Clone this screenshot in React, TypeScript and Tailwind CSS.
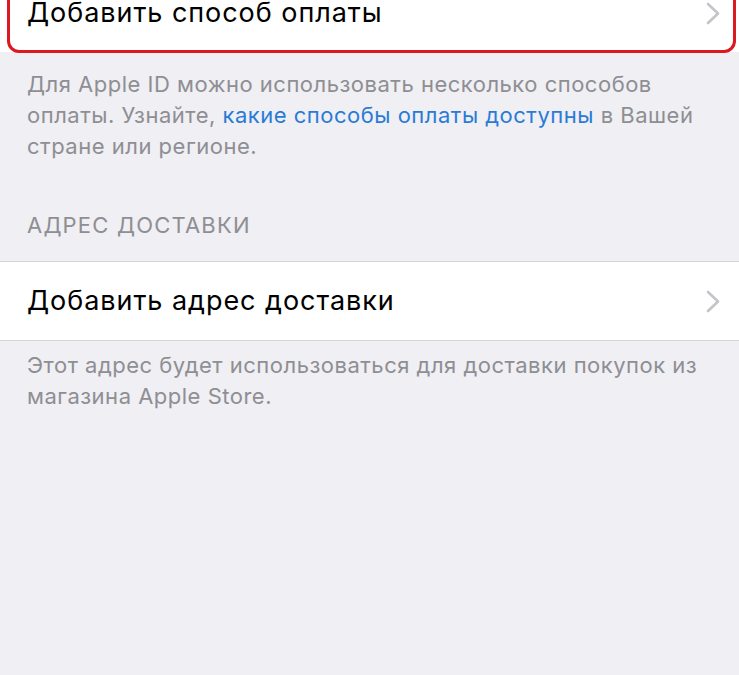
const font = { fontFamily: 'Inter, "Noto Sans", sans-serif' };

function Chevron() {
  return (
    <svg width="14" height="23" viewBox="0 0 14 23" fill="none" className="shrink-0">
      <path d="M2 2L12 11.5L2 21" stroke="#c4c4c9" strokeWidth="2.6" strokeLinecap="round" strokeLinejoin="round" />
    </svg>
  );
}

export default function App() {
  return (
    <div className="w-[739px] h-[675px] overflow-hidden bg-[#efeff4]" style={font}>
      {/* payment row, outlined in red */}
      <div className="relative mt-[-26px] h-[78px] bg-white flex items-center justify-between pl-[27px] pr-[19px]">
        <span className="text-[27px] text-black tracking-[0.95px]">Добавить способ оплаты</span>
        <Chevron />
        <div className="absolute left-[7px] right-[3px] top-[10px] bottom-[-1px] border-[3px] border-[#dc1820] rounded-[12px] pointer-events-none" />
      </div>

      <p className="pt-[17px] pl-[27px] pr-[28px] text-[22px] leading-[31px] text-[#8e8e93] tracking-[0.5px]">
        Для Apple ID можно использовать несколько способов оплаты. Узнайте,{' '}
        <span className="text-[#2a7bd4]">какие способы оплаты доступны</span> в Вашей стране или регионе.
      </p>

      <div className="mt-[49px] px-[27px] text-[22px] leading-[28px] text-[#8e8e93] tracking-[1.2px]">
        АДРЕС ДОСТАВКИ
      </div>

      <div className="mt-[22px] h-[80px] bg-white border-y border-[#d4d4d8] flex items-center justify-between pl-[27px] pr-[19px]">
        <span className="text-[27px] text-black tracking-[0.95px]">Добавить адрес доставки</span>
        <Chevron />
      </div>

      <p className="pt-[9px] pl-[27px] pr-[28px] text-[22px] leading-[31px] text-[#8e8e93] tracking-[0.5px]">
        Этот адрес будет использоваться для доставки покупок из магазина Apple Store.
      </p>
    </div>
  );
}
